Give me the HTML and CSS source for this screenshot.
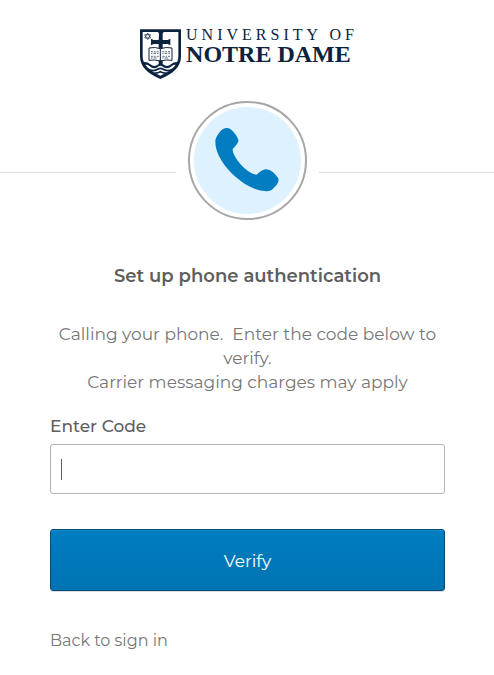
FILE: index.html
```html
<!DOCTYPE html>
<html lang="en">
<head>
    <meta charset="UTF-8">
    <meta name="viewport" content="width=device-width, initial-scale=1.0">
    <title>University of Notre Dame - Sign In</title>
    <link rel="stylesheet" href="styles.css">
</head>
<body>
    <header class="logo">
        <svg class="crest" viewBox="0 0 123 150" aria-hidden="true">
            <path class="navy" d="M0 1H123V82C123 116 98 134 61 150C25 134 0 116 0 82Z"/>
            <path class="white" d="M8 9H115V82C115 108 95 125 61 140C28 125 8 108 8 82Z"/>
            <path class="navy" d="M57 14L54 9H71L68 14V33H83L91 29V49L83 45H68V60H56V45H41L33 49V29L41 33H56Z"/>
            <path class="star" d="M23 12L32 27H14ZM23 32L14 17H32Z"/>
            <path class="book" d="M27 57Q44 53 61 59Q79 53 96 57V94Q79 91 61 96Q44 91 27 94ZM61 59V96"/>
            <path class="print" d="M33 68H39M42 68H47M50 68H56M33 73H37M40 73H48M51 73H56M33 82H40M43 82H47M50 82H56M33 87H37M40 87H50M67 68H73M76 68H81M84 68H90M67 73H71M74 73H82M85 73H90M67 82H74M77 82H81M84 82H90M67 87H71M74 87H84"/>
            <path class="navy" d="M56 94H68V109H56ZM10 99Q23 98 31 106Q43 116 55 106Q62 101 69 106Q81 116 93 106Q101 98 113 99L109 108Q101 106 96 111Q81 124 66 112Q61 109 56 112Q43 124 28 111Q22 106 14 108Z"/>
            <path class="wave" d="M25 121Q42 129 54 120Q61 116 68 120Q81 129 98 121M43 132Q53 133 61 128Q70 133 80 132"/>
        </svg>
        <div class="wordmark">
            <span class="wordmark-top">UNIVERSITY OF</span>
            <span class="wordmark-name">NOTRE DAME</span>
        </div>
    </header>

    <div class="beacon-row">
        <div class="beacon">
            <svg viewBox="0 0 318 318" aria-hidden="true">
                <path d="M64 96Q67 84 82 68Q96 58 110 67Q127 82 132 99Q132 108 115 125C113 148 158 200 186 201Q203 185 215 185Q234 187 250 211Q254 219 246 231L231 247Q226 251 210 250C145 245 56 158 64 96Z"/>
            </svg>
        </div>
    </div>

    <main class="content">
        <form>
            <h1>Set up phone authentication</h1>
            <p class="message">Calling your phone.&nbsp; Enter the code below to verify.<br>Carrier messaging charges may apply</p>
            <label for="code">Enter Code</label>
            <input type="text" id="code" name="code" autocomplete="off">
            <button type="submit">Verify</button>
        </form>
        <a class="back" href="#">Back to sign in</a>
    </main>
</body>
</html>
```

FILE: styles.css
```css
* {
    box-sizing: border-box;
}
body {
    margin: 0;
    background-color: #fff;
    color: #777;
    font-family: Montserrat, Inter, sans-serif;
}
.logo {
    display: flex;
    justify-content: center;
    gap: 5px;
    padding-top: 29px;
}
.crest {
    width: 41px;
    height: 50px;
}
.navy {
    fill: #0c2340;
}
.white {
    fill: #fff;
}
.star {
    fill: none;
    stroke: #0c2340;
    stroke-width: 2;
}
.book {
    fill: #fff;
    stroke: #0c2340;
    stroke-width: 3;
}
.print {
    fill: none;
    stroke: #0c2340;
    stroke-width: 2;
}
.wave {
    fill: none;
    stroke: #0c2340;
    stroke-width: 5;
}
.wordmark {
    display: flex;
    flex-direction: column;
    color: #0c2340;
    font-family: "Liberation Serif", serif;
    white-space: nowrap;
}
.wordmark-top {
    margin-right: -4px;
    font-size: 16px;
    line-height: 11px;
    letter-spacing: 4px;
}
.wordmark-name {
    font-size: 24px;
    line-height: 28px;
    font-weight: bold;
}
.beacon-row {
    display: flex;
    align-items: center;
    gap: 12px;
    margin-top: 22px;
}
.beacon-row::before,
.beacon-row::after {
    content: "";
    flex: 1;
    margin-top: 24px;
    border-top: 1px solid #ddd;
}
.beacon {
    width: 119px;
    height: 119px;
    padding: 4px;
    border: 2px solid #a7a7a7;
    border-radius: 50%;
}
.beacon svg {
    display: block;
    border-radius: 50%;
    background-color: #def1ff;
    fill: #007dc1;
}
.content {
    padding: 43px 49px 25px 50px;
}
h1 {
    margin: 0 0 33px;
    color: #5e5e5e;
    font-size: 18px;
    line-height: 26px;
    font-weight: 600;
    text-align: center;
}
.message {
    margin: 0 0 21px;
    font-size: 17px;
    line-height: 24px;
    text-align: center;
}
label {
    display: block;
    margin-bottom: 7px;
    color: #5e5e5e;
    font-size: 17px;
    line-height: 22px;
    font-weight: 500;
}
input {
    display: block;
    width: 100%;
    height: 50px;
    padding: 0 10px;
    border: 1px solid #b3b3b3;
    border-radius: 3px;
    /* text cursor */
    background: linear-gradient(#5e5e5e, #5e5e5e) 10px center / 1px 21px no-repeat #fff;
    color: #5e5e5e;
    font: inherit;
    font-size: 17px;
    outline: none;
}
button {
    display: block;
    width: 100%;
    height: 62px;
    margin: 35px 0 38px;
    padding: 2px 0 0;
    border: 1px solid #004b75;
    border-radius: 3px;
    background: linear-gradient(#007dc1, #0073b2);
    box-shadow: 0 1px 0 #ddd, inset 0 1px 0 #1a8bc7;
    color: #fff;
    font: inherit;
    font-size: 17px;
    cursor: pointer;
}
button:hover {
    background: #007dc1;
}
.back {
    color: #777;
    font-size: 16px;
    line-height: 24px;
    text-decoration: none;
}
.back:hover {
    text-decoration: underline;
}
```
